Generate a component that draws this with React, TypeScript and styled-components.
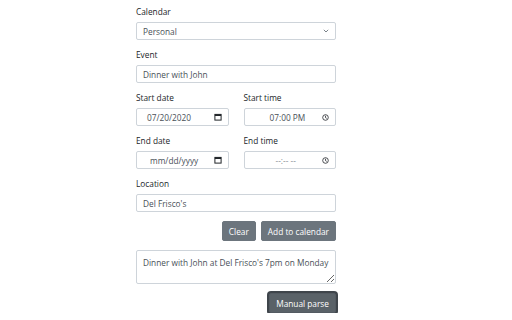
import React from "react";
import styled, { createGlobalStyle } from "styled-components";

const Global = createGlobalStyle`
  html, body { margin: 0; padding: 0; background: #fff; }
  body { font-family: "Open Sans", "Noto Sans", sans-serif; color: #212529; }
  * { box-sizing: border-box; }
`;

const Form = styled.form`
  width: 200px;
  margin: 6px 0 0 136px;
  display: flex;
  flex-direction: column;
`;

const Group = styled.div`
  display: flex;
  flex-direction: column;
  margin-bottom: 9px;
`;

const Row = styled.div`
  display: grid;
  grid-template-columns: 1fr 1fr;
  column-gap: 15px;
`;

const Label = styled.label`
  font-size: 8.3px;
  line-height: 12px;
  margin-bottom: 4px;
  color: #212529;
`;

const Field = styled.div`
  height: 18px;
  border: 1px solid #ced4da;
  border-radius: 2px;
  background: #fff;
  display: flex;
  align-items: center;
  padding: 0 6px;
  font-size: 8.3px;
  color: #495057;
  gap: 4px;
`;

const FieldText = styled.span<{ $indent?: number; $muted?: boolean }>`
  flex: 1;
  padding-left: ${(p) => p.$indent ?? 0}px;
  color: ${(p) => (p.$muted ? "#8a9096" : "#495057")};
  white-space: nowrap;
`;

const Actions = styled.div`
  display: flex;
  justify-content: flex-end;
  gap: 5px;
  margin-bottom: 9px;
`;

const Button = styled.button<{ $focused?: boolean }>`
  height: 20px;
  padding: 0 6px;
  font-family: inherit;
  font-size: 8.3px;
  color: #fff;
  background: ${(p) => (p.$focused ? "#5a6268" : "#6c757d")};
  border: 1px solid ${(p) => (p.$focused ? "#545b62" : "#6c757d")};
  border-radius: 2px;
  box-shadow: ${(p) => (p.$focused ? "0 0 0 2px #3f454b" : "none")};
`;

const TextArea = styled.textarea`
  height: 34px;
  width: 100%;
  border: 1px solid #ced4da;
  border-radius: 2px;
  padding: 6px 3px 6px 6px;
  font-family: inherit;
  font-size: 8.3px;
  line-height: 12px;
  color: #495057;
  resize: vertical;
  margin-bottom: 9px;
  display: block;
  overflow: hidden;
`;

const ButtonRow = styled.div`
  display: flex;
  justify-content: flex-end;
`;

const Chevron = () => (
  <svg width="6" height="4" viewBox="0 0 6 4">
    <path d="M0.8 0.8 L3 3 L5.2 0.8" fill="none" stroke="#6c757d" strokeWidth="0.9" />
  </svg>
);

const CalendarIcon = () => (
  <svg width="8" height="8" viewBox="0 0 8 8">
    <rect x="0.9" y="1.4" width="6.2" height="5.7" fill="none" stroke="#212529" strokeWidth="1" />
    <rect x="0.9" y="1.4" width="6.2" height="1.6" fill="#212529" />
  </svg>
);

const ClockIcon = () => (
  <svg width="7" height="7" viewBox="0 0 7 7">
    <circle cx="3.5" cy="3.5" r="2.8" fill="none" stroke="#212529" strokeWidth="0.8" />
    <path d="M3.5 1.8 V3.6 L4.7 4.4" fill="none" stroke="#212529" strokeWidth="0.8" />
  </svg>
);

export default function App() {
  return (
    <>
      <Global />
      <Form>
        <Group>
          <Label>Calendar</Label>
          <Field>
            <FieldText>Personal</FieldText>
            <Chevron />
          </Field>
        </Group>
        <Group>
          <Label>Event</Label>
          <Field>
            <FieldText>Dinner with John</FieldText>
          </Field>
        </Group>
        <Row>
          <Group>
            <Label>Start date</Label>
            <Field>
              <FieldText $indent={4}>07/20/2020</FieldText>
              <CalendarIcon />
            </Field>
          </Group>
          <Group>
            <Label>Start time</Label>
            <Field>
              <FieldText $indent={19}>07:00 PM</FieldText>
              <ClockIcon />
            </Field>
          </Group>
        </Row>
        <Row>
          <Group>
            <Label>End date</Label>
            <Field>
              <FieldText $indent={7}>mm/dd/yyyy</FieldText>
              <CalendarIcon />
            </Field>
          </Group>
          <Group>
            <Label>End time</Label>
            <Field>
              <FieldText $indent={25} $muted>--:-- --</FieldText>
              <ClockIcon />
            </Field>
          </Group>
        </Row>
        <Group>
          <Label>Location</Label>
          <Field>
            <FieldText>Del Frisco's</FieldText>
          </Field>
        </Group>
        <Actions>
          <Button type="button">Clear</Button>
          <Button type="button">Add to calendar</Button>
        </Actions>
        <TextArea defaultValue="Dinner with John at Del Frisco's 7pm on Monday" />
        <ButtonRow>
          <Button type="button" $focused>Manual parse</Button>
        </ButtonRow>
      </Form>
    </>
  );
}
